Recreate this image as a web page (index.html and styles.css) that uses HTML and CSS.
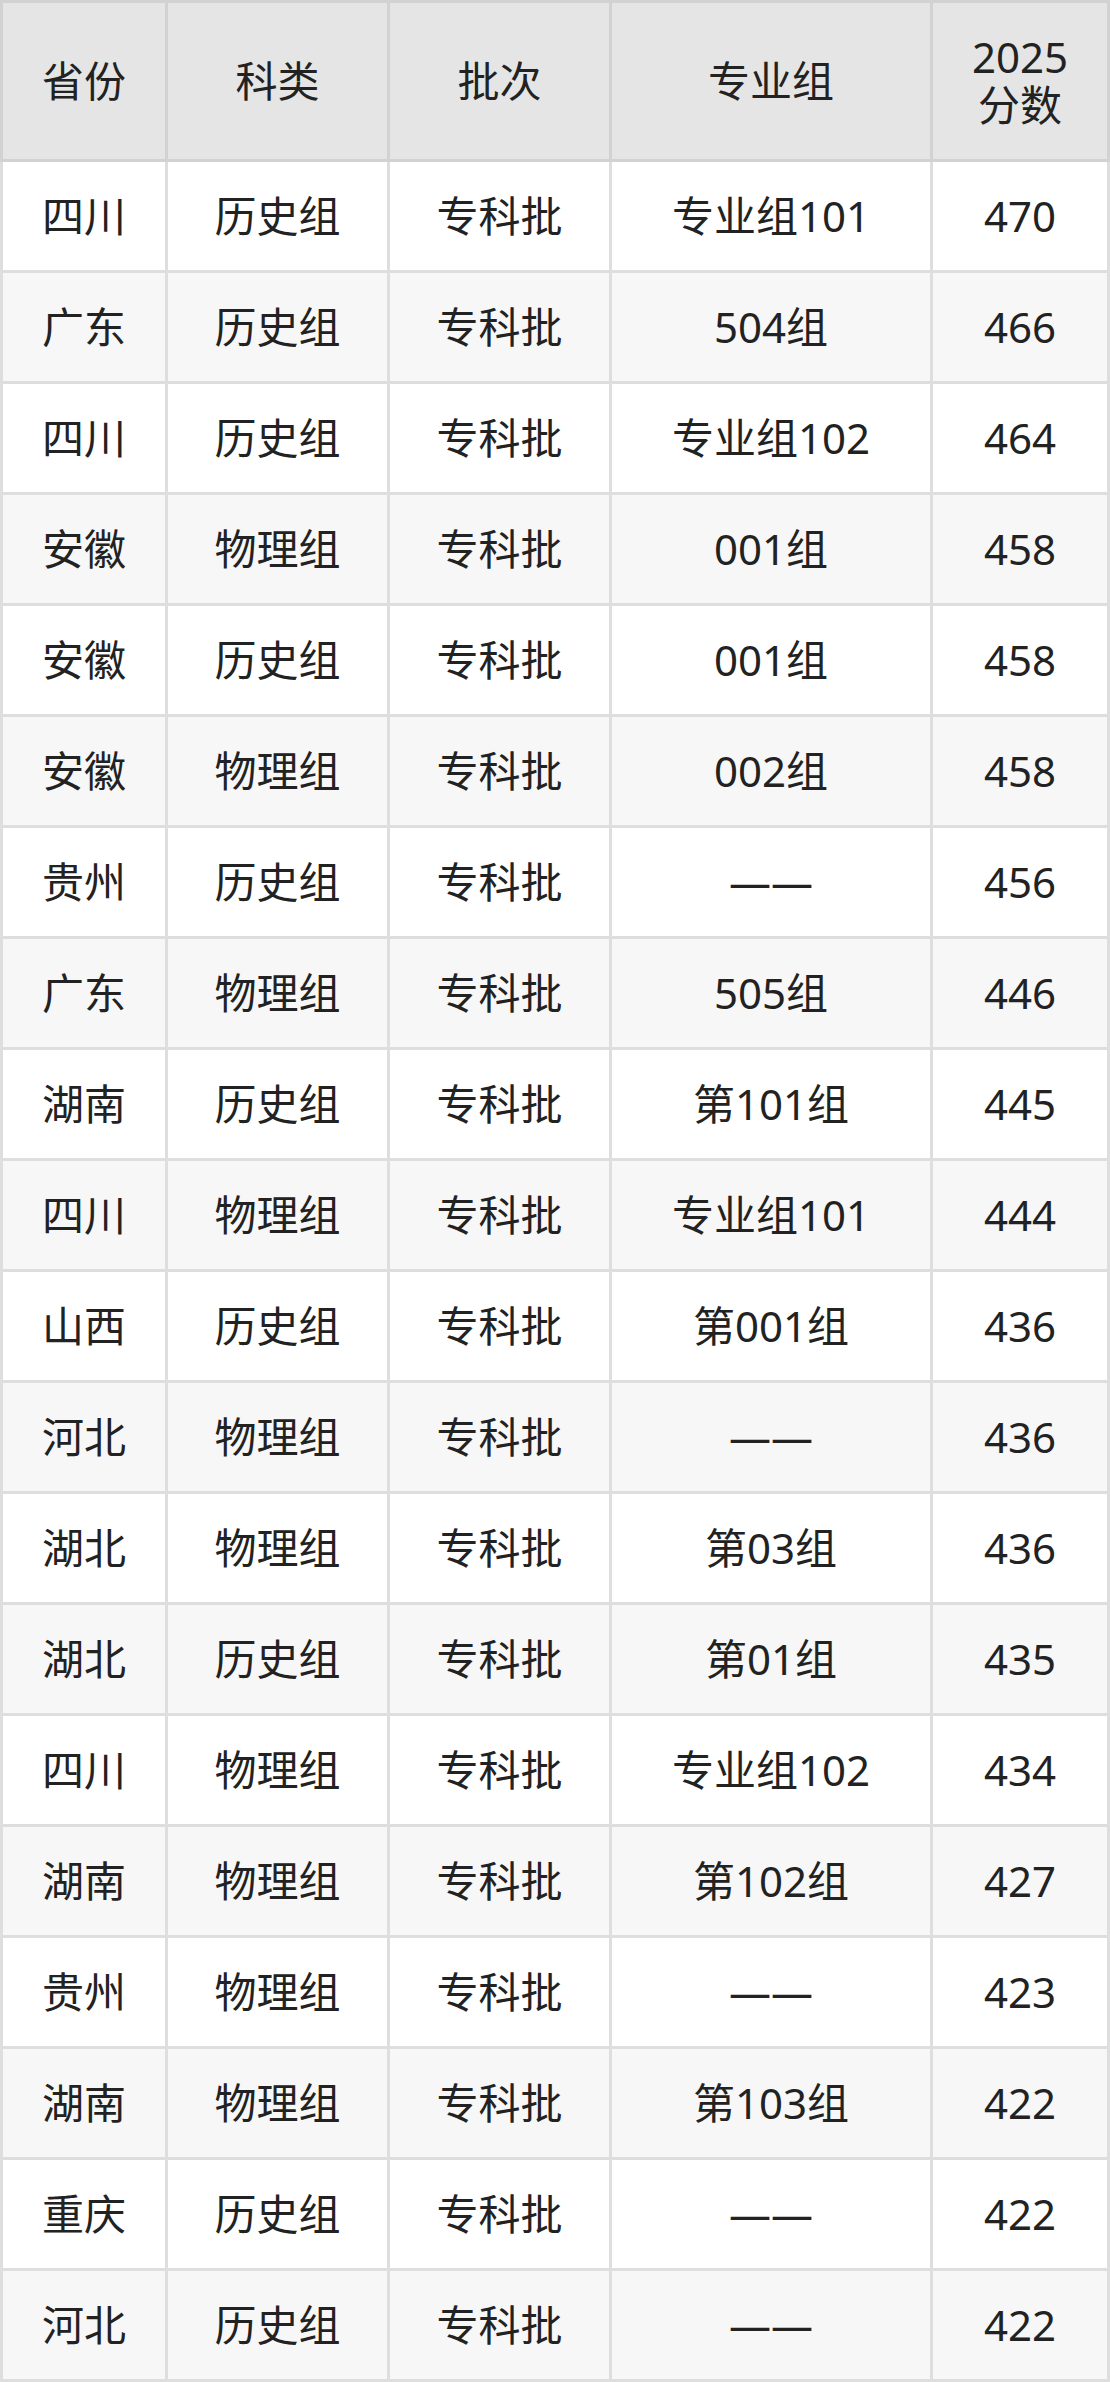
FILE: index.html
```html
<!DOCTYPE html>
<html lang="zh">
<head>
    <meta charset="UTF-8">
    <meta name="viewport" content="width=device-width, initial-scale=1.0">
    <title>专科批分数线</title>
    <link rel="stylesheet" href="styles.css">
</head>
<body>
    <table class="score-table">
        <colgroup>
            <col class="c-prov">
            <col class="c-type">
            <col class="c-batch">
            <col class="c-group">
            <col class="c-score">
        </colgroup>
        <thead>
            <tr>
                <th>省份</th>
                <th>科类</th>
                <th>批次</th>
                <th>专业组</th>
                <th>2025<br>分数</th>
            </tr>
        </thead>
        <tbody>
            <tr><td>四川</td><td>历史组</td><td>专科批</td><td>专业组101</td><td>470</td></tr>
            <tr><td>广东</td><td>历史组</td><td>专科批</td><td>504组</td><td>466</td></tr>
            <tr><td>四川</td><td>历史组</td><td>专科批</td><td>专业组102</td><td>464</td></tr>
            <tr><td>安徽</td><td>物理组</td><td>专科批</td><td>001组</td><td>458</td></tr>
            <tr><td>安徽</td><td>历史组</td><td>专科批</td><td>001组</td><td>458</td></tr>
            <tr><td>安徽</td><td>物理组</td><td>专科批</td><td>002组</td><td>458</td></tr>
            <tr><td>贵州</td><td>历史组</td><td>专科批</td><td>——</td><td>456</td></tr>
            <tr><td>广东</td><td>物理组</td><td>专科批</td><td>505组</td><td>446</td></tr>
            <tr><td>湖南</td><td>历史组</td><td>专科批</td><td>第101组</td><td>445</td></tr>
            <tr><td>四川</td><td>物理组</td><td>专科批</td><td>专业组101</td><td>444</td></tr>
            <tr><td>山西</td><td>历史组</td><td>专科批</td><td>第001组</td><td>436</td></tr>
            <tr><td>河北</td><td>物理组</td><td>专科批</td><td>——</td><td>436</td></tr>
            <tr><td>湖北</td><td>物理组</td><td>专科批</td><td>第03组</td><td>436</td></tr>
            <tr><td>湖北</td><td>历史组</td><td>专科批</td><td>第01组</td><td>435</td></tr>
            <tr><td>四川</td><td>物理组</td><td>专科批</td><td>专业组102</td><td>434</td></tr>
            <tr><td>湖南</td><td>物理组</td><td>专科批</td><td>第102组</td><td>427</td></tr>
            <tr><td>贵州</td><td>物理组</td><td>专科批</td><td>——</td><td>423</td></tr>
            <tr><td>湖南</td><td>物理组</td><td>专科批</td><td>第103组</td><td>422</td></tr>
            <tr><td>重庆</td><td>历史组</td><td>专科批</td><td>——</td><td>422</td></tr>
            <tr><td>河北</td><td>历史组</td><td>专科批</td><td>——</td><td>422</td></tr>
        </tbody>
    </table>
</body>
</html>
```

FILE: styles.css
```css
body {
    margin: 0;
    background-color: #fff;
    font-family: "Noto Sans", "Noto Sans CJK SC", sans-serif;
    color: #222;
}
.score-table {
    width: 1110px;
    border-collapse: collapse;
    table-layout: fixed;
    font-size: 42px;
}
.c-prov { width: 165px; }
.c-type { width: 222px; }
.c-batch { width: 222px; }
.c-group { width: 321px; }
.c-score { width: 177px; }
.score-table th,
.score-table td {
    padding: 0;
    text-align: center;
    vertical-align: middle;
    font-weight: normal;
}
.score-table th {
    height: 156px;
    line-height: 48px;
    background-color: #e5e5e5;
    border: 3px solid #d2d2d2;
}
.score-table td {
    height: 108px;
    line-height: 48px;
    border: 3px solid #dedede;
}
.score-table tbody tr:nth-child(even) td {
    background-color: #f7f7f7;
}
```
